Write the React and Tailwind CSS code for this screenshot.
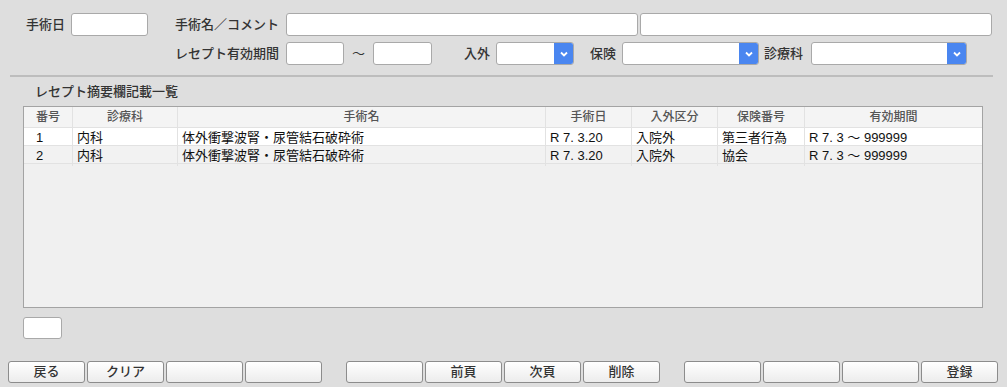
import React from "react";

const FONT = { fontFamily: '"Liberation Sans", "Noto Sans CJK JP", sans-serif' };

function Input({ w }) {
  return <div className={`h-[23px] ${w} bg-white border border-[#a9a9a9] rounded-[3px] shrink-0`} />;
}

function Select({ w }) {
  return (
    <div className={`h-[23px] ${w} bg-white border border-[#a9a9a9] rounded-[3px] flex shrink-0 overflow-hidden`}>
      <div className="flex-1" />
      <div className="w-[19px] h-full bg-[#4a86f0] flex items-center justify-center">
        <svg width="8" height="6" viewBox="0 0 8 6">
          <polyline points="1,1.5 4,4.5 7,1.5" fill="none" stroke="white" strokeWidth="1.8" />
        </svg>
      </div>
    </div>
  );
}

function Label({ children, className = "" }) {
  return <span className={`text-[13px] font-medium text-[#333] leading-none whitespace-nowrap ${className}`}>{children}</span>;
}

function Btn({ children }) {
  return (
    <div className="w-[77px] h-[22px] rounded-[3px] border border-[#8c8c8c] bg-gradient-to-b from-white to-[#ececec] flex items-center justify-center text-[13px] font-medium text-[#333]">
      {children}
    </div>
  );
}

const cols = "grid grid-cols-[49px_105px_368px_86px_86px_87px_1fr]";

const rows = [
  ["1", "内科", "体外衝撃波腎・尿管結石破砕術", "R 7. 3.20", "入院外", "第三者行為", "R 7. 3 ～ 999999"],
  ["2", "内科", "体外衝撃波腎・尿管結石破砕術", "R 7. 3.20", "入院外", "協会", "R 7. 3 ～ 999999"],
];

export default function App() {
  return (
    <div className="w-[1007px] h-[387px] bg-[#dedede] overflow-hidden" style={FONT}>
      {/* Row 1 */}
      <div className="flex items-center h-[23px] mt-[13px]">
        <Label className="ml-[26px] w-[45px]">手術日</Label>
        <Input w="w-[77px]" />
        <Label className="ml-[27px] w-[111px]">手術名／コメント</Label>
        <Input w="w-[352px]" />
        <div className="w-[2px]" />
        <Input w="w-[352px]" />
      </div>
      {/* Row 2 */}
      <div className="flex items-center h-[23px] mt-[6px]">
        <Label className="ml-[175px] w-[111px]">レセプト有効期間</Label>
        <Input w="w-[58px]" />
        <span className="w-[29px] text-center text-[13px] text-[#333]">～</span>
        <Input w="w-[59px]" />
        <Label className="ml-[32px] w-[32px]">入外</Label>
        <Select w="w-[78px]" />
        <Label className="ml-[16px] w-[32px]">保険</Label>
        <Select w="w-[137px]" />
        <Label className="ml-[5px] w-[47px]">診療科</Label>
        <Select w="w-[156px]" />
      </div>
      {/* Separator */}
      <div className="ml-[10px] w-[983px] h-[2px] bg-[#bdbdbd] mt-[10px]" />
      {/* Title */}
      <div className="mt-[6px] ml-[35px] h-[16px] flex items-center">
        <Label>レセプト摘要欄記載一覧</Label>
      </div>
      {/* Table */}
      <div className="mt-[7px] ml-[23px] w-[960px] h-[202px] border border-[#a3a3a3] bg-[#f0f0f0] flex flex-col">
        <div className={`${cols} h-[21px] bg-[#f4f4f4] border-b border-[#e2e2e2] text-[12px] font-medium text-[#555]`}>
          {["番号", "診療科", "手術名", "手術日", "入外区分", "保険番号", "有効期間"].map((h, i) => (
            <div key={i} className={`flex items-center justify-center ${i < 6 ? "border-r border-[#e2e2e2]" : ""}`}>
              {h}
            </div>
          ))}
        </div>
        {rows.map((r, ri) => (
          <div key={ri} className={`${cols} h-[18px] border-b border-[#e2e2e2] ${ri === 0 ? "bg-white" : "bg-[#f2f2f2]"} text-[13px] text-[#111]`}>
            {r.map((c, i) => (
              <div key={i} className={`flex items-center whitespace-nowrap ${i === 0 ? "pl-[12px]" : "pl-[4px]"} ${i < 6 ? "border-r border-[#e2e2e2]" : ""}`}>
                {c}
              </div>
            ))}
          </div>
        ))}
      </div>
      {/* small input */}
      <div className="mt-[9px] ml-[23px] w-[39px] h-[22px] bg-white border border-[#a9a9a9] rounded-[3px]" />
      {/* buttons */}
      <div className="mt-[22px] flex">
        <div className="ml-[8px] flex gap-[2px]">
          <Btn>戻る</Btn>
          <Btn>クリア</Btn>
          <Btn />
          <Btn />
        </div>
        <div className="ml-[24px] flex gap-[2px]">
          <Btn />
          <Btn>前頁</Btn>
          <Btn>次頁</Btn>
          <Btn>削除</Btn>
        </div>
        <div className="ml-[24px] flex gap-[2px]">
          <Btn />
          <Btn />
          <Btn />
          <Btn>登録</Btn>
        </div>
      </div>
    </div>
  );
}
